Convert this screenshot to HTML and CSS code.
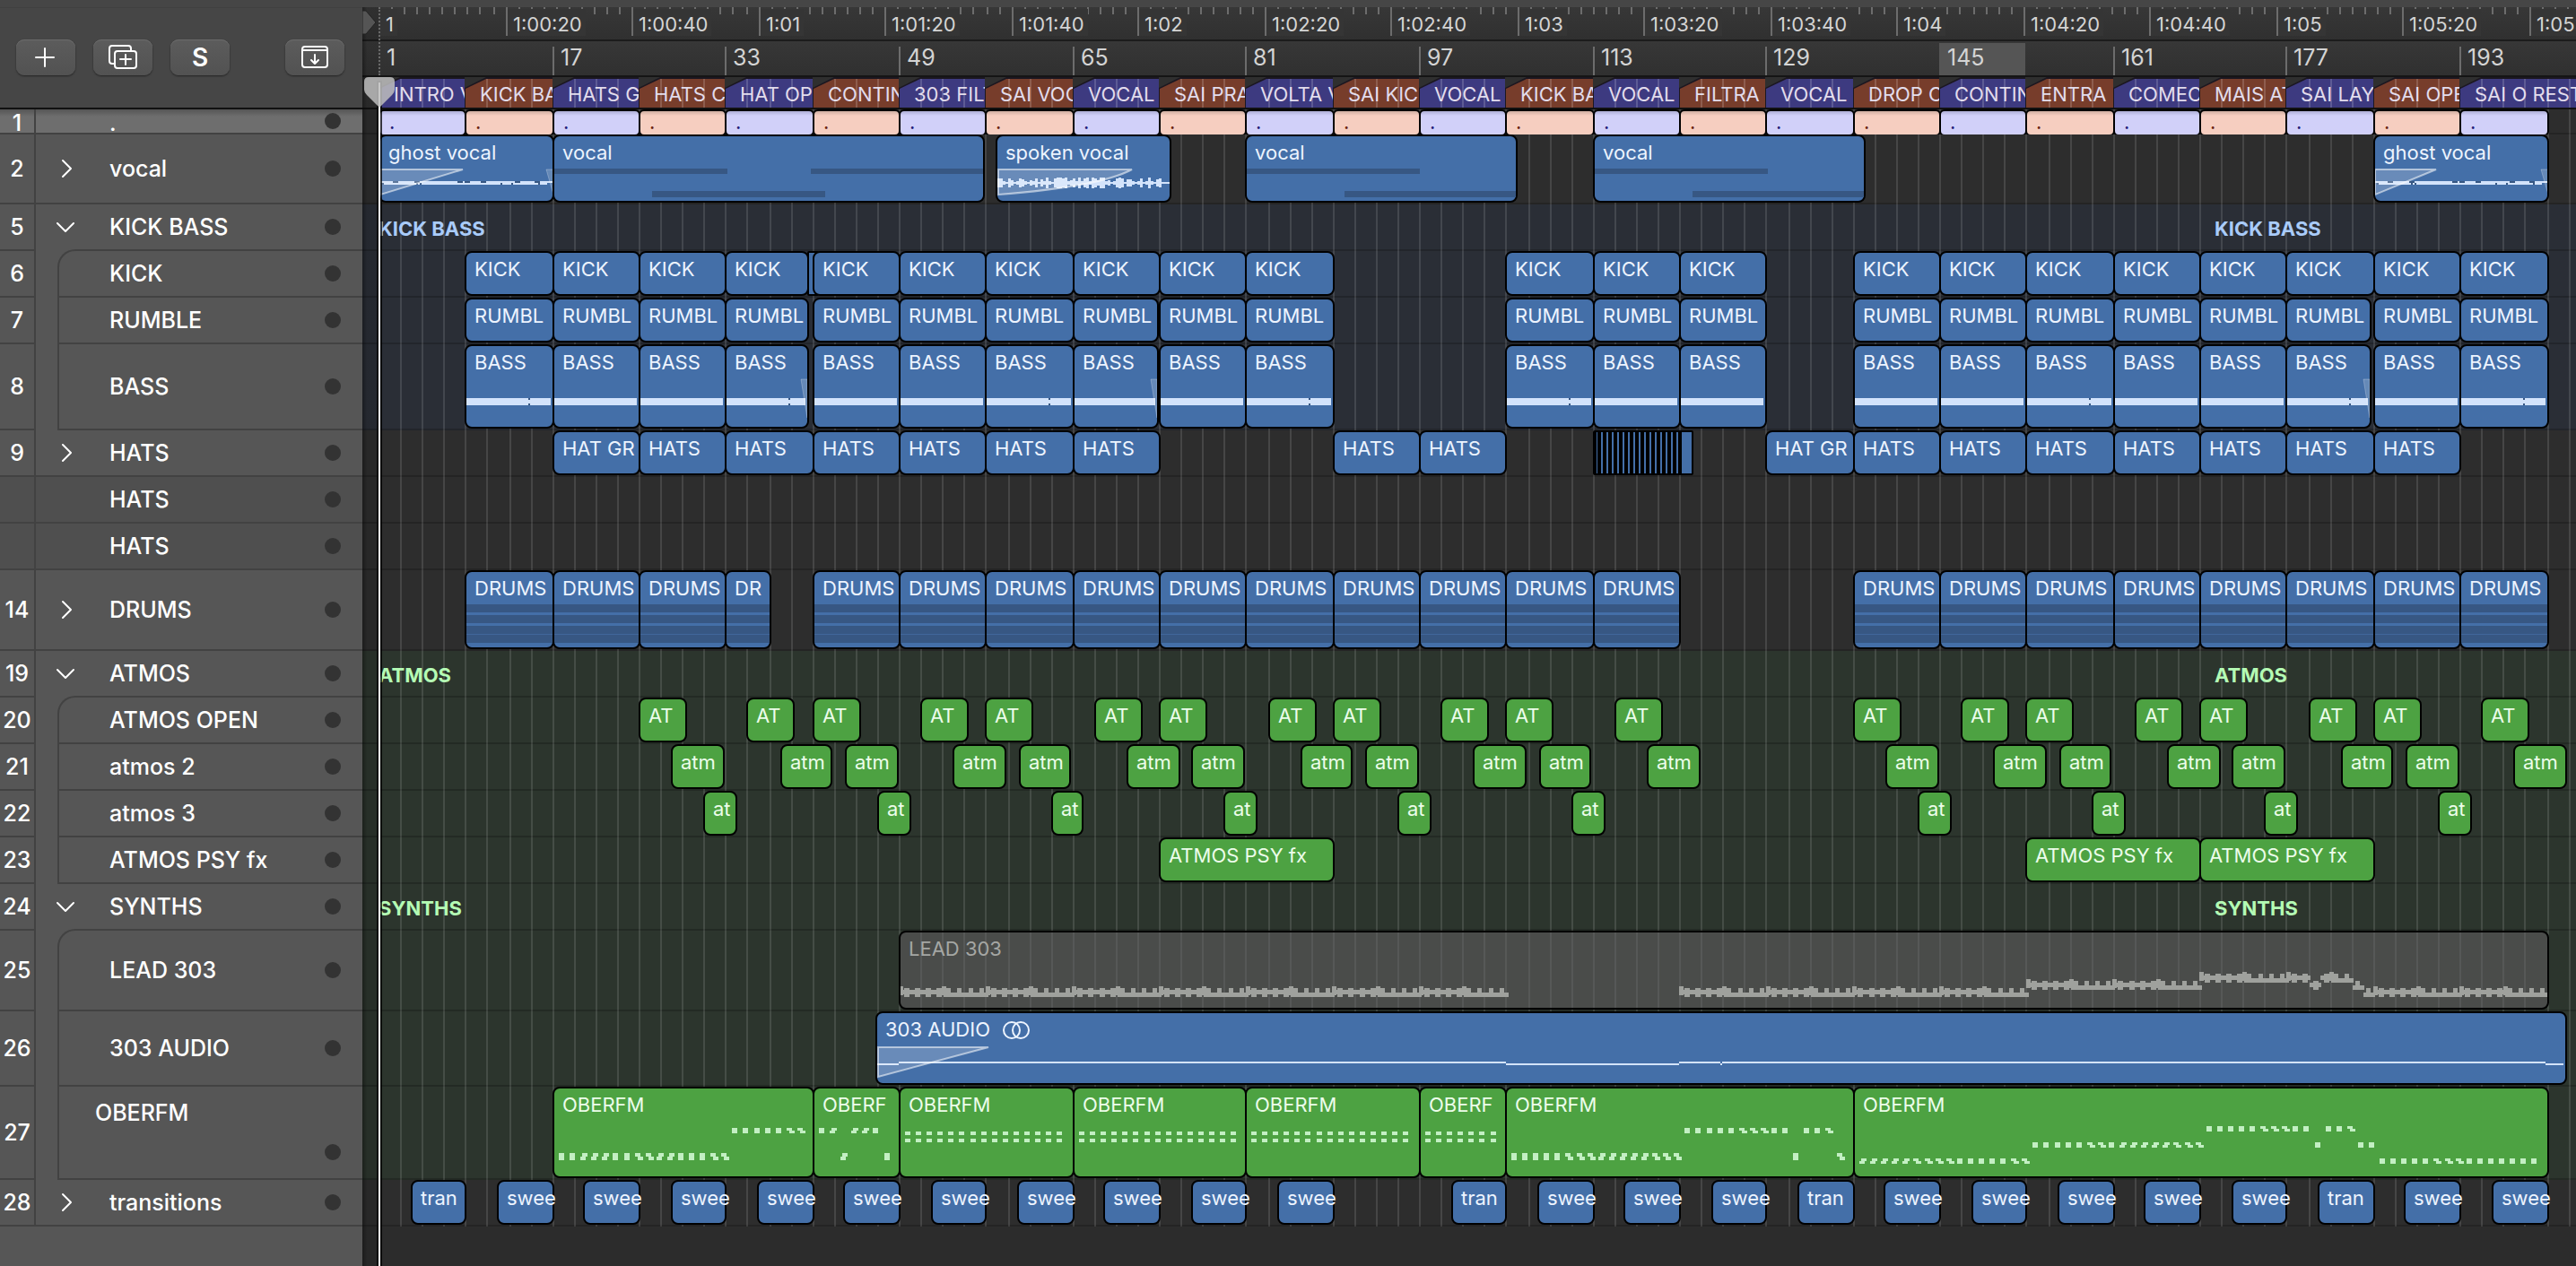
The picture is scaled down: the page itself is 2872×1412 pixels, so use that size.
FILE: index.html
```html
<!DOCTYPE html>
<html lang="en">
<head>
    <meta charset="UTF-8">
    <meta name="viewport" content="width=device-width, initial-scale=1.0">
    <title>Arrangement - Tracks</title>
    <link rel="stylesheet" href="styles.css">
</head>
<body>
    <svg class="symbols" aria-hidden="true">
        <symbol id="chevron-right" viewBox="0 0 22 22">
            <path d="M8 2 L17 11 L8 20" fill="none" stroke="currentColor" stroke-width="2" stroke-linecap="round" stroke-linejoin="round"/>
        </symbol>
        <symbol id="chevron-down" viewBox="0 0 22 22">
            <path d="M2 7 L11 16 L20 7" fill="none" stroke="currentColor" stroke-width="2" stroke-linecap="round" stroke-linejoin="round"/>
        </symbol>
    </svg>

    <div class="topbar"></div>

    <div class="workspace">
        <header class="header">
            <div class="toolbar">
                <button type="button" class="tool-btn" aria-label="Add track">
                    <svg width="36" height="36" viewBox="0 0 36 36"><path d="M17 8 V28 M7 18 H27"/></svg>
                </button>
                <button type="button" class="tool-btn" aria-label="Duplicate track">
                    <svg width="36" height="36" viewBox="0 0 36 36">
                        <rect x="9" y="11" width="24" height="19" rx="3"/>
                        <path d="M9 25 H6 Q3 25 3 22 V8 Q3 5 6 5 H24 Q27 5 27 8 V11 M21 15 V26 M15 20 H27"/>
                    </svg>
                </button>
                <button type="button" class="tool-btn solo">S</button>
                <button type="button" class="tool-btn catch" aria-label="Show track alternatives">
                    <svg width="36" height="36" viewBox="0 0 36 36">
                        <rect x="4" y="6" width="28" height="23" rx="3"/>
                        <path d="M4 10 H32 M18 15 V25 M14 21 L18 25 L22 21"/>
                    </svg>
                </button>
            </div>
            <div class="rulers">
                <div class="ruler ruler-time" id="timeRuler"></div>
                <div class="ruler ruler-bars" id="barRuler"></div>
                <div class="ruler ruler-markers" id="markerRuler"></div>
            </div>
        </header>

        <main class="tracks" id="tracks">
            <div class="grid" id="grid"></div>

            <section class="track track-first">
                <div class="number">1</div>
                <div class="head"><span class="name">.</span><span class="dot"></span></div>
                <div class="lane" id="lane-arranger"></div>
            </section>
            <section class="track track-vocal">
                <div class="number">2</div>
                <div class="head">
                    <button type="button" class="toggle" aria-label="Open vocal"><svg><use href="#chevron-right"/></svg></button>
                    <span class="name">vocal</span><span class="dot"></span>
                </div>
                <div class="lane" id="lane-vocal"></div>
            </section>

            <section class="track track-group">
                <div class="number">5</div>
                <div class="head">
                    <button type="button" class="toggle" aria-label="Close KICK BASS"><svg><use href="#chevron-down"/></svg></button>
                    <span class="name">KICK BASS</span><span class="dot"></span>
                </div>
                <div class="lane lane-blue" id="lane-kickbass"></div>
            </section>
            <section class="track child child-first">
                <div class="number">6</div>
                <div class="head"><span class="name">KICK</span><span class="dot"></span></div>
                <div class="lane lane-blue" id="lane-kick"></div>
            </section>
            <section class="track child">
                <div class="number">7</div>
                <div class="head"><span class="name">RUMBLE</span><span class="dot"></span></div>
                <div class="lane lane-blue" id="lane-rumble"></div>
            </section>
            <section class="track child track-bass">
                <div class="number">8</div>
                <div class="head"><span class="name">BASS</span><span class="dot"></span></div>
                <div class="lane lane-blue" id="lane-bass"></div>
            </section>

            <section class="track">
                <div class="number">9</div>
                <div class="head">
                    <button type="button" class="toggle" aria-label="Open HATS"><svg><use href="#chevron-right"/></svg></button>
                    <span class="name">HATS</span><span class="dot"></span>
                </div>
                <div class="lane" id="lane-hats"></div>
            </section>
            <section class="track alternative">
                <div class="number"></div>
                <div class="head"><span class="name">HATS</span><span class="dot"></span></div>
                <div class="lane"></div>
            </section>
            <section class="track alternative">
                <div class="number"></div>
                <div class="head"><span class="name">HATS</span><span class="dot"></span></div>
                <div class="lane"></div>
            </section>
            <section class="track track-tall">
                <div class="number">14</div>
                <div class="head">
                    <button type="button" class="toggle" aria-label="Open DRUMS"><svg><use href="#chevron-right"/></svg></button>
                    <span class="name">DRUMS</span><span class="dot"></span>
                </div>
                <div class="lane" id="lane-drums"></div>
            </section>

            <section class="track track-group">
                <div class="number">19</div>
                <div class="head">
                    <button type="button" class="toggle" aria-label="Close ATMOS"><svg><use href="#chevron-down"/></svg></button>
                    <span class="name">ATMOS</span><span class="dot"></span>
                </div>
                <div class="lane lane-green" id="lane-atmos"></div>
            </section>
            <section class="track child child-first">
                <div class="number">20</div>
                <div class="head"><span class="name">ATMOS OPEN</span><span class="dot"></span></div>
                <div class="lane lane-green" id="lane-open"></div>
            </section>
            <section class="track child">
                <div class="number">21</div>
                <div class="head"><span class="name">atmos 2</span><span class="dot"></span></div>
                <div class="lane lane-green" id="lane-atmos2"></div>
            </section>
            <section class="track child">
                <div class="number">22</div>
                <div class="head"><span class="name">atmos 3</span><span class="dot"></span></div>
                <div class="lane lane-green" id="lane-atmos3"></div>
            </section>
            <section class="track child">
                <div class="number">23</div>
                <div class="head"><span class="name">ATMOS PSY fx</span><span class="dot"></span></div>
                <div class="lane lane-green" id="lane-psy"></div>
            </section>

            <section class="track track-group">
                <div class="number">24</div>
                <div class="head">
                    <button type="button" class="toggle" aria-label="Close SYNTHS"><svg><use href="#chevron-down"/></svg></button>
                    <span class="name">SYNTHS</span><span class="dot"></span>
                </div>
                <div class="lane lane-green" id="lane-synths"></div>
            </section>
            <section class="track child child-first track-tall">
                <div class="number">25</div>
                <div class="head"><span class="name">LEAD 303</span><span class="dot"></span></div>
                <div class="lane lane-green" id="lane-lead"></div>
            </section>
            <section class="track child track-audio">
                <div class="number">26</div>
                <div class="head"><span class="name">303 AUDIO</span><span class="dot"></span></div>
                <div class="lane lane-green" id="lane-audio"></div>
            </section>
            <section class="track child track-oberfm">
                <div class="number">27</div>
                <div class="head"><span class="name">OBERFM</span><span class="dot"></span></div>
                <div class="lane lane-green" id="lane-oberfm"></div>
            </section>
            <section class="track">
                <div class="number">28</div>
                <div class="head">
                    <button type="button" class="toggle" aria-label="Open transitions"><svg><use href="#chevron-right"/></svg></button>
                    <span class="name">transitions</span><span class="dot"></span>
                </div>
                <div class="lane" id="lane-transitions"></div>
            </section>
        </main>

        <div class="rest"></div>

        <div class="edge"></div>
        <svg class="start-marker" width="16" height="30" viewBox="0 0 16 30"><path d="M0 1 H4 L15 14 L4 27 H0 Z"/></svg>
        <div class="playhead">
            <svg width="36" height="36" viewBox="0 0 36 36"><path d="M1 6 Q1 1 6 1 H30 Q35 1 35 6 V15 Q35 18 32 21 L18 35 L4 21 Q1 18 1 15 Z"/></svg>
        </div>
    </div>

    <script src="script.js"></script>
</body>
</html>
```
FILE: styles.css
```css
* {
    margin: 0;
    padding: 0;
    box-sizing: border-box;
}

body {
    display: flex;
    flex-direction: column;
    min-height: 100vh;
    background: #2c2c2c;
    color: #fff;
    font-family: Inter, "Liberation Sans", sans-serif;
    overflow: hidden;
}

.symbols {
    display: none;
}

.topbar {
    height: 8px;
    background: #464646;
}

.workspace {
    position: relative;
    flex: 1;
    display: flex;
    flex-direction: column;
}

/* Toolbar */
.header {
    display: flex;
    height: 114px;
}

.toolbar {
    display: flex;
    align-items: flex-start;
    gap: 20px;
    width: 404px;
    flex-shrink: 0;
    padding: 35px 20px 0 18px;
    background: #464646;
    border-top: 1px solid #404040;
}

.tool-btn {
    display: flex;
    align-items: center;
    justify-content: center;
    width: 66px;
    height: 40px;
    border: none;
    border-radius: 9px;
    background: linear-gradient(#5c5c5c, #525252);
    box-shadow: 0 1px 2px rgba(0, 0, 0, 0.5), inset 0 1px 0 #6c6c6c;
    color: #fff;
    font-family: inherit;
}

.tool-btn svg {
    fill: none;
    stroke: #fff;
    stroke-width: 2;
    stroke-linecap: round;
    stroke-linejoin: round;
}

.solo {
    font-size: 28px;
    font-weight: 600;
}

.catch {
    margin-left: auto;
}

/* Rulers */
.rulers {
    flex: 1;
    min-width: 0;
}

.ruler {
    position: relative;
    height: 38px;
    overflow: hidden;
    background: linear-gradient(#373737, #303030);
}

.ruler-time {
    border-bottom: 2px solid #1c1c1c;
}

.ruler-markers {
    border-top: 2px solid #151515;
    background: #2f2f2f;
}

.tick {
    position: absolute;
    top: 0;
    width: 2px;
    height: 8px;
    background: #6c6c6c;
}

.stamp {
    position: absolute;
    top: 2px;
    height: 30px;
    padding: 4px 4px 0 6px;
    border-left: 2px solid #6c6c6c;
    background: #353535;
    color: #d4d4d4;
    font-size: 22px;
    line-height: 26px;
    white-space: nowrap;
}

.stamp-first {
    border-color: transparent;
}

.bar-label {
    position: absolute;
    top: 6px;
    bottom: 0;
    padding-left: 7px;
    border-left: 2px solid #6c6c6c;
    color: #d4d4d4;
    font-size: 25px;
    line-height: 24px;
}

.bar-first {
    border-color: transparent;
}

.cycle {
    position: absolute;
    top: 2px;
    bottom: 0;
    background: #555;
}

.marker {
    position: absolute;
    top: 0;
    bottom: 0;
    overflow: hidden;
    background: #1b1720;
    clip-path: polygon(24px 0, 100% 0, 100% 100%, 0 100%, 0 12px);
    color: #e2dcec;
    font-size: 22px;
    line-height: 38px;
    white-space: nowrap;
}

.marker-label {
    position: relative;
    display: block;
    height: 100%;
    padding-left: 17px;
    background: #3d3a80;
    clip-path: polygon(24px 2px, 100% 2px, 100% 100%, 1px 100%, 1px 13px);
}

.marker-alt .marker-label {
    background: #773d2b;
}

.marker-line {
    position: absolute;
    top: 2px;
    bottom: 0;
    width: 2px;
    background: rgba(255, 255, 255, 0.17);
}

/* Tracks */
.tracks {
    position: relative;
    box-shadow: 0 -2px 0 #111;
}

.grid {
    position: absolute;
    top: 0;
    bottom: 0;
    left: 404px;
    right: 0;
    z-index: 1;
    overflow: hidden;
}

.grid-line {
    position: absolute;
    top: 0;
    bottom: 0;
    width: 2px;
    background: rgba(255, 255, 255, 0.12);
}

.track {
    display: flex;
    height: 52px;
    background: #565656;
}

.track-first {
    height: 28px;
    background: linear-gradient(#555, #6e6e6e 8px);
}

.track-vocal {
    height: 78px;
}

.track-bass {
    height: 96px;
}

.track-tall {
    height: 90px;
}

.track-audio {
    height: 84px;
}

.track-oberfm {
    height: 104px;
}

.alternative {
    background: #4f4f4f;
}

.number {
    display: flex;
    align-items: center;
    justify-content: center;
    width: 40px;
    border-right: 2px solid #424242;
    border-bottom: 2px solid #424242;
    font-size: 25px;
    font-weight: 500;
}

.head {
    display: flex;
    align-items: center;
    width: 364px;
    padding: 0 24px 0 82px;
    border-bottom: 2px solid #424242;
    font-size: 25px;
    font-weight: 500;
}

.toggle {
    width: 22px;
    height: 22px;
    margin: 0 38px 0 -60px;
    border: none;
    background: none;
    color: #fff;
}

.toggle svg {
    display: block;
    width: 22px;
    height: 22px;
}

.name {
    flex: 1;
    white-space: nowrap;
}

.dot {
    width: 18px;
    height: 18px;
    border-radius: 50%;
    background: #333;
}

.track-first .number,
.track-first .head {
    padding-top: 4px;
}

.track-first .dot {
    margin-bottom: 4px;
}

.track-group .head {
    border-bottom-color: transparent;
}

.child .head {
    width: 340px;
    margin-left: 24px;
    padding-left: 56px;
    border-left: 2px solid #424242;
}

.child-first .head {
    margin-top: -2px;
    border-top: 2px solid #424242;
    border-top-left-radius: 20px;
}

.track-oberfm .head {
    align-items: flex-end;
    padding: 0 24px 20px 40px;
}

.track-oberfm .name {
    align-self: flex-start;
    padding-top: 14px;
}

/* No z-index here: regions have to rise above the grid, lanes stay below it */
.lane {
    position: relative;
    flex: 1;
    min-width: 0;
    overflow: hidden;
    background: #2d2d2d;
    box-shadow: inset 0 -2px 0 #242424;
}

.lane-blue {
    background: #2a2e36;
    box-shadow: inset 0 -2px 0 #22252b;
}

.lane-green {
    background: #2c352d;
    box-shadow: inset 0 -2px 0 #232a24;
}

.stack-name {
    position: absolute;
    top: 14px;
    z-index: 2;
    color: #a9cbf9;
    font-size: 22px;
    font-weight: 700;
    line-height: 26px;
}

.lane-green .stack-name {
    color: #b4fbb4;
}

/* Regions */
.region {
    position: absolute;
    top: 0;
    bottom: 2px;
    z-index: 2;
    padding: 6px 0 0 9px;
    border: 2px solid #000;
    border-radius: 8px;
    background: #446fa8;
    color: #edf4ff;
    font-size: 22px;
    line-height: 24px;
    white-space: nowrap;
}

.region svg.content {
    position: absolute;
    top: 0;
    left: 0;
    width: 100%;
    height: 100%;
}

.region-label {
    position: relative;
}

.lane-green .region {
    background: #4da242;
    color: #ecfdea;
}

.lane-green .region.audio {
    background: #446fa8;
    color: #edf4ff;
}

.lane-green .region.muted {
    background: rgba(104, 100, 104, 0.5);
    color: #a5a7a4;
}

.region.section {
    bottom: -2px;
    padding-top: 0;
    padding-left: 10px;
    border-radius: 6px;
    background: linear-gradient(#aeaed6, #d1d0f9 5px);
    color: #24207a;
}

.region.section-alt {
    background: linear-gradient(#cfaea2, #f6cec0 5px);
    color: #6a2412;
}

.region.sliced {
    border-radius: 2px;
}

.region.drums {
    background: linear-gradient(#446fa8 36px, #375783 36px 45px, #446fa8 45px 48px, #375783 48px 57px, #446fa8 57px 60px, #375783 60px 69px, #40669b 69px 70px, #375783 70px 79px, #446fa8 79px);
}

.stereo {
    position: relative;
    top: 3px;
    margin-left: 14px;
}

.wave {
    fill: #d3e3fb;
}

.fade {
    fill: rgba(255, 255, 255, 0.2);
    stroke: rgba(255, 255, 255, 0.55);
    stroke-width: 2;
}

.fade-out {
    fill: rgba(255, 255, 255, 0.18);
    stroke: rgba(255, 255, 255, 0.25);
    stroke-width: 1;
}

.subregion {
    fill: #375783;
}

.notes {
    fill: #c3efc3;
}

.muted .notes {
    fill: #9fa19d;
}

/* Area below the last track */
.rest {
    flex: 1;
    width: 404px;
    background: #565656;
}

.edge {
    position: absolute;
    top: 0;
    bottom: 0;
    left: 404px;
    width: 18px;
    background: linear-gradient(90deg, rgba(0, 0, 0, 0.4), rgba(0, 0, 0, 0.12) 5px);
}

.start-marker {
    position: absolute;
    top: 3px;
    left: 404px;
    fill: #555;
    stroke: #222;
}

.playhead {
    position: absolute;
    top: 84px;
    bottom: 0;
    left: 422px;
    z-index: 3;
    width: 2px;
    background: #fff;
    box-shadow: 0 0 0 2px rgba(0, 0, 0, 0.75);
}

.playhead::before {
    content: "";
    position: absolute;
    top: -84px;
    height: 76px;
    border-left: 2px dotted #6a6a6a;
}

.playhead svg {
    position: absolute;
    top: -7px;
    left: -17px;
    fill: rgba(190, 190, 190, 0.85);
}
```
FILE: script.js
```js
// Horizontal zoom of the timeline
const PX_PER_BAR = 12.0846;
const ORIGIN = 19.1;
const PX_PER_STAMP = 141.03;
const LAST_BAR = 203;

// Everything on the timeline sits on a two pixel raster
const snap = (x) => Math.floor(x / 2) * 2;
const barX = (bar) => snap(ORIGIN + (bar - 1) * PX_PER_BAR);
const spanX = (bars) => bars * PX_PER_BAR;

function add(parent, className, left, text) {
    const el = document.createElement('div');
    el.className = className;
    el.style.left = left + 'px';
    if (text) el.textContent = text;
    parent.appendChild(el);
    return el;
}

function addRegion(laneId, start, end, label, className = '', content = '') {
    const left = barX(start);
    const el = add(document.getElementById(laneId), 'region ' + className, left);
    el.style.width = barX(end) - left + 2 + 'px';
    el.innerHTML = (content ? `<svg class="content">${content}</svg>` : '') +
        `<span class="region-label">${label}</span>`;
    return el;
}

const rect = (x, y, w, h) => `<rect x="${Math.round(x)}" y="${y}" width="${Math.round(w)}" height="${h}"/>`;

function range(from, to, step = 8) {
    const list = [];
    for (let i = from; i <= to; i += step) list.push(i);
    return list;
}

/* ---------- Rulers ---------- */
const timeRuler = document.getElementById('timeRuler');
const stamps = ['1', '1:00:20', '1:00:40', '1:01', '1:01:20', '1:01:40', '1:02', '1:02:20', '1:02:40', '1:03',
    '1:03:20', '1:03:40', '1:04', '1:04:20', '1:04:40', '1:05', '1:05:20', '1:05:40'];
for (let i = 1; i < stamps.length * 10; i++) {
    add(timeRuler, 'tick', snap(ORIGIN + i * PX_PER_STAMP / 10));
}
stamps.forEach((text, i) => {
    add(timeRuler, i ? 'stamp' : 'stamp stamp-first', snap(ORIGIN + i * PX_PER_STAMP), text);
});

const barRuler = document.getElementById('barRuler');
add(barRuler, 'cycle', barX(145)).style.width = barX(153) - barX(145) + 'px';
range(1, 193, 16).forEach((bar) => {
    add(barRuler, bar === 1 || bar === 145 ? 'bar-label bar-first' : 'bar-label', barX(bar), String(bar));
});

const markers = ['INTRO V', 'KICK BA', 'HATS G', 'HATS C', 'HAT OP', 'CONTIN', '303 FILT', 'SAI VOC',
    'VOCAL', 'SAI PRA', 'VOLTA V', 'SAI KIC', 'VOCAL', 'KICK BA', 'VOCAL', 'FILTRA', 'VOCAL', 'DROP C',
    'CONTIN', 'ENTRA', 'COMEC', 'MAIS AT', 'SAI LAY', 'SAI OPE', 'SAI O REST'];
const markerRuler = document.getElementById('markerRuler');
markers.forEach((name, i) => {
    const bar = 1 + i * 8;
    const last = i === markers.length - 1;
    const el = add(markerRuler, i % 2 ? 'marker marker-alt' : 'marker', barX(bar));
    el.style.width = barX(last ? bar + 16 : bar + 8) - barX(bar) + 'px';
    const label = document.createElement('span');
    label.className = 'marker-label';
    label.textContent = name;
    el.appendChild(label);
    range(bar + 2, last ? bar + 10 : bar + 6, 2).forEach((b) => add(el, 'marker-line', barX(b) - barX(bar)));
    addRegion('lane-arranger', bar, bar + 8, '.', i % 2 ? 'section section-alt' : 'section');
});

const grid = document.getElementById('grid');
range(3, LAST_BAR, 2).forEach((bar) => add(grid, 'grid-line', barX(bar)));

/* ---------- Stack names ---------- */
[['lane-kickbass', 'KICK BASS'], ['lane-atmos', 'ATMOS'], ['lane-synths', 'SYNTHS']].forEach(([id, name]) => {
    const lane = document.getElementById(id);
    add(lane, 'stack-name', 18, name);
    add(lane, 'stack-name', 2065, name);
});

/* ---------- Vocal ---------- */
function ghostContent(fadeWidth) {
    let out = '<g class="wave">' + rect(0, 50, 192, 2) + rect(4, 52, 182, 2) + '</g><g class="subregion">';
    [14, 38, 86, 94, 112, 150, 172].forEach((x) => out += rect(x, 50, 6, 2));
    [2, 40, 44, 134, 146, 176].forEach((x) => out += rect(x, 52, 2, 2));
    out += `</g><path class="fade" d="M0 37 H${fadeWidth} L0 65 Z"/>`;
    return out + '<path class="fade-out" d="M185 37 H193 V65 Z"/>';
}
addRegion('lane-vocal', 1, 17, 'ghost vocal', '', ghostContent(92));

// Packed takes: upper and lower sub-regions in bars from the region start
function takes(upper, lower) {
    return '<g class="subregion">' +
        upper.map(([a, b]) => rect(spanX(a), 36, spanX(b - a), 6)).join('') +
        lower.map(([a, b]) => rect(spanX(a), 61, spanX(b - a), 7)).join('') + '</g>';
}
addRegion('lane-vocal', 17, 56.7, 'vocal', '', takes([[0, 16], [23.7, 40]], [[9, 25]]));

const amps = [5, 5, 2, 1, 5, 3, 1, 2, 5, 4, 2, 1, 3, 2, 5, 1, 4, 2, 6, 2, 1, 5, 6, 6, 5, 6, 2, 3, 5, 2, 6, 2, 5, 6, 2, 6, 5,
    3, 6, 6, 2, 3, 1, 2, 5, 6, 5, 1, 4, 4, 2, 1, 2, 5, 1, 2, 6, 2, 1, 4, 5, 1, 1, 1];
addRegion('lane-vocal', 57.95, 73.95, 'spoken vocal', '',
    '<g class="wave">' + amps.map((a, i) => rect(i * 3, 52 - a, 3, a * 2)).join('') + '</g>' +
    '<path class="fade" d="M1 37 H150 Q115 56 1 65 Z"/>');
addRegion('lane-vocal', 81, 106, 'vocal', '', takes([[0, 16]], [[9, 25]]));
addRegion('lane-vocal', 113, 138, 'vocal', '', takes([[0, 16]], [[9, 25]]));
addRegion('lane-vocal', 185, 201, 'ghost vocal', '', ghostContent(68));

/* ---------- Kick, rumble, bass ---------- */
const kickBars = [...range(9, 81), ...range(105, 121), ...range(137, 193)];
kickBars.forEach((bar) => {
    if (bar === 41) addRegion('lane-kick', 40.6, 41.3, '', 'sliced');
    addRegion('lane-kick', bar, bar === 33 ? 40.6 : bar + 8, 'KICK');
    const cut = [33, 65, 177].includes(bar);
    const end = bar + (bar === 33 ? 7.6 : cut ? 7.75 : 8);
    addRegion('lane-rumble', bar, end, 'RUMBL');

    const width = barX(end) - barX(bar) - 2;
    let content = '<g class="wave">' + rect(0, 58, width - 2, 8) + '</g>';
    if ([9, 33, 57, 81, 105, 153, 177, 193].includes(bar)) {
        content += '<g class="subregion">' + rect(69, 58, 2, 2) + rect(69, 64, 2, 2) + '</g>';
    }
    if (cut) content += `<path class="fade-out" d="M${width - 7} 37 H${width} V80 Z"/>`;
    addRegion('lane-bass', bar, end, 'BASS', '', content);
});

/* ---------- Hats, drums ---------- */
[...range(17, 65), 89, 97, ...range(129, 185)].forEach((bar) => {
    addRegion('lane-hats', bar, bar + 8, bar === 17 || bar === 129 ? 'HAT GR' : 'HATS');
});
addRegion('lane-hats', 113, 122.1, '', 'sliced', '<g>' + range(0, 90, 6).map((x) => rect(x + 3, 0, 4, 50)).join('') + rect(0, 0, 2, 50) + '</g>');
[...range(9, 113), ...range(137, 193)].forEach((bar) => {
    addRegion('lane-drums', bar, bar === 33 ? 37 : bar + 8, bar === 33 ? 'DR' : 'DRUMS', 'drums');
});

/* ---------- Atmos ---------- */
[25, 41, 57, 73, 89, 105, 137, 153, 169, 185].forEach((bar) => {
    addRegion('lane-open', bar, bar + 4.3, 'AT');
    addRegion('lane-open', bar + 10, bar + 14.3, 'AT');
    addRegion('lane-atmos2', bar + 3, bar + 7.75, 'atm');
    addRegion('lane-atmos2', bar + 13, bar + 17.75, 'atm');
    addRegion('lane-atmos3', bar + 6, bar + 8.95, 'at');
});
[73, 153, 169].forEach((bar) => addRegion('lane-psy', bar, bar + 16, 'ATMOS PSY fx'));

/* ---------- Lead 303 ---------- */
// [first bar, end bar, rise in pixels]
const leadParts = [[49, 105, 0], [121, 153, 0], [153, 169, 8], [169, 179, 16], [179, 180, 8], [180, 183, 16], [183, 184, 8], [184, 201, 0]];
let lead = '<g class="notes">';
leadParts.forEach(([from, to, rise]) => {
    for (let bar = from; bar < to; bar++) {
        const x = spanX(bar - 49);
        const step = (bar - 1) % 8;
        if (step < 4) {
            lead += rect(x, 64 - rise, 13, 5) + rect(x + 4, 62 - rise, 6, 10);
        } else {
            lead += rect(x, 67 - rise, 13, 5) + rect(x + 3, 62 - rise, 5, 7);
        }
        if (step === 0 || step === 4) lead += rect(x - 2, 60 - rise, 5, 10);
    }
});
addRegion('lane-lead', 49, 201, 'LEAD 303', 'muted', lead + '</g>');

/* ---------- 303 audio ---------- */
const audio = addRegion('lane-audio', 46.9, 202.7, '303 AUDIO', 'audio',
    '<g class="wave">' + rect(0, 56, 24, 2) + rect(24, 54, 677, 2) + rect(701, 56, 193, 2) + rect(894, 54, 46, 2) +
    rect(940, 56, 2, 2) + rect(942, 54, 918, 2) + rect(1860, 56, 20, 2) + '</g>' +
    '<path class="fade" d="M1 38 H124 L1 71 Z"/>');
audio.insertAdjacentHTML('beforeend',
    '<svg class="stereo" width="30" height="20" viewBox="0 0 30 20" fill="none" stroke="#edf4ff" stroke-width="2"><circle cx="10" cy="10" r="9"/><circle cx="20" cy="10" r="9"/></svg>');

/* ---------- OBERFM ---------- */
// One character per bar: s = straight, u = step up, d = step down
function pattern(text, y, h) {
    let out = '';
    [...text].forEach((c, i) => {
        const x = spanX(i) + 5;
        if (c === 's') out += rect(x, y, 6, h);
        if (c === 'u') out += rect(x, y + h / 2, 6, h / 2) + rect(x + 2, y, 6, h / 2);
        if (c === 'd') out += rect(x, y, 6, h / 2) + rect(x + 3, y + h / 2, 6, h / 2);
    });
    return out;
}
const notes = (...rows) => '<g class="notes">' + rows.map((r) => pattern(...r)).join('') + '</g>';
const gap = (n) => ' '.repeat(n);
const chords = (n) => notes(['s'.repeat(n), 48, 4]) + notes(['s'.repeat(n), 56, 4]);

addRegion('lane-oberfm', 17, 41, 'OBERFM', '', notes(['ssuuussdduusssdd', 72, 8], [gap(16) + 'sssssdd', 44, 6]));
addRegion('lane-oberfm', 41, 49, 'OBERF', '', notes(['su uus', 44, 6], ['  u   s', 72, 8]));
[49, 65, 81].forEach((bar) => addRegion('lane-oberfm', bar, bar + 16, 'OBERFM', '', chords(15)));
addRegion('lane-oberfm', 97, 105, 'OBERF', '', chords(7));
addRegion('lane-oberfm', 105, 137, 'OBERFM', '', notes(
    ['sssssddduuuuuddd' + gap(10) + 's   d', 72, 8],
    [gap(16) + 'sssssdddss ssd', 44, 6]));
addRegion('lane-oberfm', 137, 201, 'OBERFM', '', notes(
    ['uuuuuddddsssssdd' + gap(32) + 'sssssdddsssssss', 78, 6],
    [gap(16) + 'sssssddsuuuuuddd' + gap(10) + 's   ss', 60, 6],
    [gap(32) + 'sssssdddss ssd', 42, 6]));

/* ---------- Transitions ---------- */
[9, ...range(17, 89), ...range(105, 201)].forEach((end) => {
    const label = [9, 105, 137, 185].includes(end) ? 'tran' : 'swee';
    addRegion('lane-transitions', end - 5.1, end, label);
});
```
